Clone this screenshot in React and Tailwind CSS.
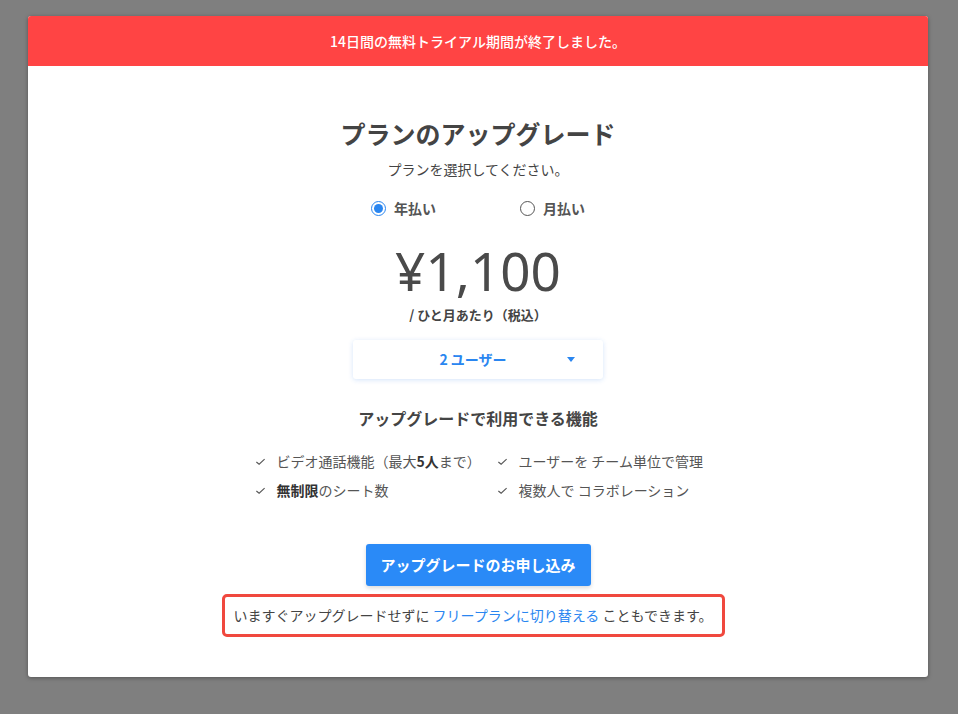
import React, { useState } from 'react';

const features = [
  [<>ビデオ通話機能（最大<b className="font-bold text-[#333]">5人</b>まで）</>, 'ユーザーを チーム単位で管理'],
  [<><b className="font-bold text-[#333]">無制限</b>のシート数</>, '複数人で コラボレーション'],
];

const Check = () => (
  <svg className="w-[11px] h-[11px] shrink-0" viewBox="0 0 12 12" fill="none" stroke="#555" strokeWidth="1.2">
    <path d="M1.5 6.5 L4.5 9 L10.5 3.5" />
  </svg>
);

const Radio = ({ checked }) => (
  <span
    className={`w-[15px] h-[15px] rounded-full border flex items-center justify-center ${
      checked ? 'border-[#2a86f0]' : 'border-[#555]'
    }`}
  >
    {checked && <span className="w-[9px] h-[9px] rounded-full bg-[#2a86f0]" />}
  </span>
);

export default function App() {
  const [billing, setBilling] = useState('yearly');

  return (
    <div
      className="w-[958px] h-[714px] bg-[#7f7f7f] pt-4 pl-7 overflow-hidden"
      style={{ fontFamily: '"Noto Sans CJK JP", "Noto Sans", sans-serif' }}
    >
      <div className="w-[900px] h-[661px] bg-white rounded-[3px] overflow-hidden shadow-[0_1px_4px_rgba(0,0,0,0.35)] flex flex-col">
        {/* Banner */}
        <div className="h-[50px] bg-[#ff4444] flex items-center justify-center text-white text-[14px] font-medium">
          14日間の無料トライアル期間が終了しました。
        </div>

        <div className="flex flex-col items-center text-[#444]">
          <h1 className="mt-[50px] text-[25px] leading-[34px] font-bold text-[#444]">プランのアップグレード</h1>
          <p className="mt-[9px] text-[14px] leading-5 text-[#444]">プランを選択してください。</p>

          <div className="mt-[19px] flex items-center gap-[84px] text-[14px] font-bold text-[#555]">
            <button className="flex items-center gap-[8px]" onClick={() => setBilling('yearly')}>
              <Radio checked={billing === 'yearly'} />
              年払い
            </button>
            <button className="flex items-center gap-[8px]" onClick={() => setBilling('monthly')}>
              <Radio checked={billing === 'monthly'} />
              月払い
            </button>
          </div>

          <div className="mt-[24px] text-[53px] leading-[56px] text-[#4a4a4a]" style={{ fontFamily: '"Noto Sans", sans-serif' }}>
            ¥1,100
          </div>
          <div className="mt-[6px] text-[13px] leading-5 font-bold text-[#444]">/ ひと月あたり（税込）</div>

          <div className="mt-[15px] w-[250px] h-[39px] rounded-[3px] bg-white shadow-[0_1px_5px_rgba(40,120,230,0.2)] flex items-center relative">
            <span className="w-full text-center pr-[10px] text-[14px] font-bold text-[#2a86f0]">2 ユーザー</span>
            <svg className="absolute right-[28px] top-[17px]" width="8" height="5" viewBox="0 0 8 5">
              <path d="M0 0 H8 L4 5 Z" fill="#2a86f0" />
            </svg>
          </div>

          <h2 className="mt-[27px] text-[16px] font-bold text-[#444]">アップグレードで利用できる機能</h2>

          <div className="mt-[21px] grid grid-cols-[242px_205px] gap-y-[9px] text-[14px] text-[#555] whitespace-nowrap">
            {features.map((row, i) => (
              <React.Fragment key={i}>
                <div className="flex items-center gap-[11px] leading-5">
                  <Check />
                  <span>{row[0]}</span>
                </div>
                <div className="flex items-center gap-[11px] leading-5">
                  <Check />
                  <span>{row[1]}</span>
                </div>
              </React.Fragment>
            ))}
          </div>

          <button className="mt-[44px] w-[225px] h-[42px] rounded-[3px] bg-[#2a8af7] text-white text-[15px] font-bold shadow-[0_2px_4px_rgba(0,0,0,0.15)]">
            アップグレードのお申し込み
          </button>

          <div className="mt-[8px] mr-[10px] w-[503px] h-[43px] border-[3px] border-[#f0483e] rounded-[5px] flex items-center justify-center text-[14px] text-[#444]">
            いますぐアップグレードせずに&nbsp;<a className="text-[#2a86f0]">フリープランに切り替える</a>&nbsp;こともできます。
          </div>
        </div>
      </div>
    </div>
  );
}
